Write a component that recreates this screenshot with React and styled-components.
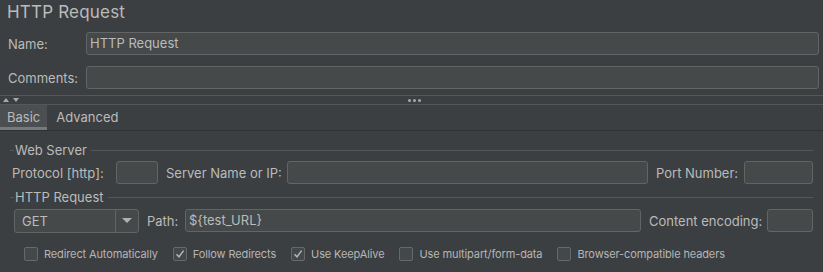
import React from "react"
import styled, { createGlobalStyle } from "styled-components"

const GlobalStyle = createGlobalStyle`
  html, body {
    margin: 0;
    padding: 0;
    background: #3c3f41;
  }
  body {
    font-family: Inter, "Open Sans", sans-serif;
    color: #bbbbbb;
  }
`

const Page = styled.div`
  width: 823px;
  height: 272px;
  background: #3c3f41;
  overflow: hidden;
`

const Title = styled.div`
  height: 32px;
  padding-left: 7px;
  font-size: 17px;
  line-height: 25px;
  letter-spacing: 0.2px;
  color: #bbbbbb;
`

const Row = styled.div`
  display: flex;
  align-items: center;
  height: 23px;
  padding: ${(p) => p.$pad || "0 4px 0 8px"};
  margin-bottom: ${(p) => p.$mb || 0}px;
  gap: ${(p) => p.$gap || 0}px;
`

const Label = styled.label`
  font-size: 13px;
  color: #bbbbbb;
  width: ${(p) => (p.$w ? p.$w + "px" : "auto")};
  flex-shrink: 0;
  white-space: nowrap;
`

const Input = styled.div`
  box-sizing: border-box;
  height: ${(p) => p.$h || 23}px;
  width: ${(p) => (p.$w ? p.$w + "px" : "auto")};
  flex: ${(p) => (p.$w ? "none" : 1)};
  background: #45494a;
  border: 1px solid #646464;
  border-radius: 3px;
  font-size: 13px;
  line-height: 21px;
  padding-left: 3px;
  color: #bbbbbb;
  white-space: nowrap;
`

const Splitter = styled.div`
  position: relative;
  height: 8px;
  margin-top: 6px;
  border-top: 1px solid #555859;
  border-bottom: 1px solid #555859;
  display: flex;
  align-items: center;
  justify-content: center;
`

const Arrows = styled.div`
  position: absolute;
  left: 3px;
  top: 2px;
  display: flex;
  gap: 4px;
`

const Arrow = styled.span`
  width: 0;
  height: 0;
  border-left: 3px solid transparent;
  border-right: 3px solid transparent;
  border-bottom: ${(p) => (p.$up ? "4px solid #a9a9a9" : "none")};
  border-top: ${(p) => (p.$up ? "none" : "4px solid #a9a9a9")};
`

const Dots = styled.div`
  display: flex;
  gap: 2px;
  margin-left: 6px;
  span {
    width: 3px;
    height: 3px;
    border-radius: 50%;
    background: #a9a9a9;
  }
`

const TabBar = styled.div`
  display: flex;
  height: 25px;
  border-bottom: 1px solid #2f3132;
`

const Tab = styled.div`
  box-sizing: border-box;
  height: 25px;
  padding: 0 7px;
  font-size: 13px;
  line-height: 24px;
  color: #bbbbbb;
  background: ${(p) => (p.$active ? "#4b4f51" : "transparent")};
  border-bottom: 3px solid ${(p) => (p.$active ? "#747a80" : "transparent")};
  margin-right: ${(p) => (p.$active ? 2 : 0)}px;
`

const Group = styled.div`
  padding: ${(p) => p.$pad};
`

const GroupHead = styled.div`
  display: flex;
  align-items: center;
  height: 16px;
  margin-bottom: ${(p) => p.$mb}px;
  &::before {
    content: "";
    width: 4px;
    height: 1px;
    background: #555859;
    margin-right: 1px;
  }
  &::after {
    content: "";
    flex: 1;
    height: 1px;
    background: #555859;
    margin-left: 4px;
  }
`

const GroupTitle = styled.span`
  font-size: 13px;
  color: #bbbbbb;
`

const Select = styled.div`
  box-sizing: border-box;
  display: flex;
  width: 125px;
  height: 24px;
  background: #45494a;
  border: 1px solid #646464;
  border-radius: 3px;
  flex: none;
`

const SelectValue = styled.div`
  width: 101px;
  font-size: 13px;
  line-height: 22px;
  padding-left: 7px;
  box-sizing: border-box;
  border-right: 1px solid #646464;
`

const SelectArrow = styled.div`
  flex: 1;
  display: flex;
  align-items: center;
  justify-content: center;
  &::after {
    content: "";
    border-left: 5px solid transparent;
    border-right: 5px solid transparent;
    border-top: 5px solid #b0b0b0;
  }
`

const Checks = styled.div`
  display: flex;
  align-items: center;
  height: 14px;
  padding-left: 14px;
  margin-top: 15px;
`

const Check = styled.div`
  display: flex;
  align-items: center;
  margin-right: 15px;
  font-size: 11px;
  letter-spacing: -0.12px;
  color: #b5b5b5;
  white-space: nowrap;
`

const Box = styled.div`
  box-sizing: border-box;
  width: 14px;
  height: 14px;
  border: 1px solid #686868;
  border-radius: 2px;
  background: #43494a;
  margin-right: 6px;
  display: flex;
  align-items: center;
  justify-content: center;
`

const Tick = () => (
  <svg width="10" height="10" viewBox="0 0 10 10">
    <path d="M1.5 5.2 L4 7.8 L8.6 1.6" fill="none" stroke="#b8b8b8" strokeWidth="1.4" />
  </svg>
)

const checks = [
  { label: "Redirect Automatically", on: false },
  { label: "Follow Redirects", on: true },
  { label: "Use KeepAlive", on: true },
  { label: "Use multipart/form-data", on: false },
  { label: "Browser-compatible headers", on: false },
]

export default function App() {
  return (
    <Page>
      <GlobalStyle />
      <Title>HTTP Request</Title>
      <Row $mb={11}>
        <Label $w={78}>Name:</Label>
        <Input>HTTP Request</Input>
      </Row>
      <Row>
        <Label $w={78}>Comments:</Label>
        <Input />
      </Row>
      <Splitter>
        <Arrows>
          <Arrow $up />
          <Arrow />
        </Arrows>
        <Dots>
          <span />
          <span />
          <span />
        </Dots>
      </Splitter>
      <TabBar>
        <Tab $active>Basic</Tab>
        <Tab>Advanced</Tab>
      </TabBar>
      <Group $pad="11px 10px 0 10px">
        <GroupHead $mb={3}>
          <GroupTitle>Web Server</GroupTitle>
        </GroupHead>
        <Row $pad="0 0 0 2px" $gap={8}>
          <Label $w={96}>Protocol [http]:</Label>
          <Input $w={42} />
          <Label $w={113}>Server Name or IP:</Label>
          <Input />
          <Label $w={80}>Port Number:</Label>
          <Input $w={69} />
        </Row>
      </Group>
      <Group $pad="5px 10px 0 10px">
        <GroupHead $mb={4}>
          <GroupTitle>HTTP Request</GroupTitle>
        </GroupHead>
        <Row $pad="0 0 0 4px" $gap={8}>
          <Select>
            <SelectValue>GET</SelectValue>
            <SelectArrow />
          </Select>
          <Label $w={30}>Path:</Label>
          <Input>{"${test_URL}"}</Input>
          <Label $w={110}>Content encoding:</Label>
          <Input $w={46} />
        </Row>
        <Checks>
          {checks.map((c) => (
            <Check key={c.label}>
              <Box>{c.on && <Tick />}</Box>
              {c.label}
            </Check>
          ))}
        </Checks>
      </Group>
    </Page>
  )
}
